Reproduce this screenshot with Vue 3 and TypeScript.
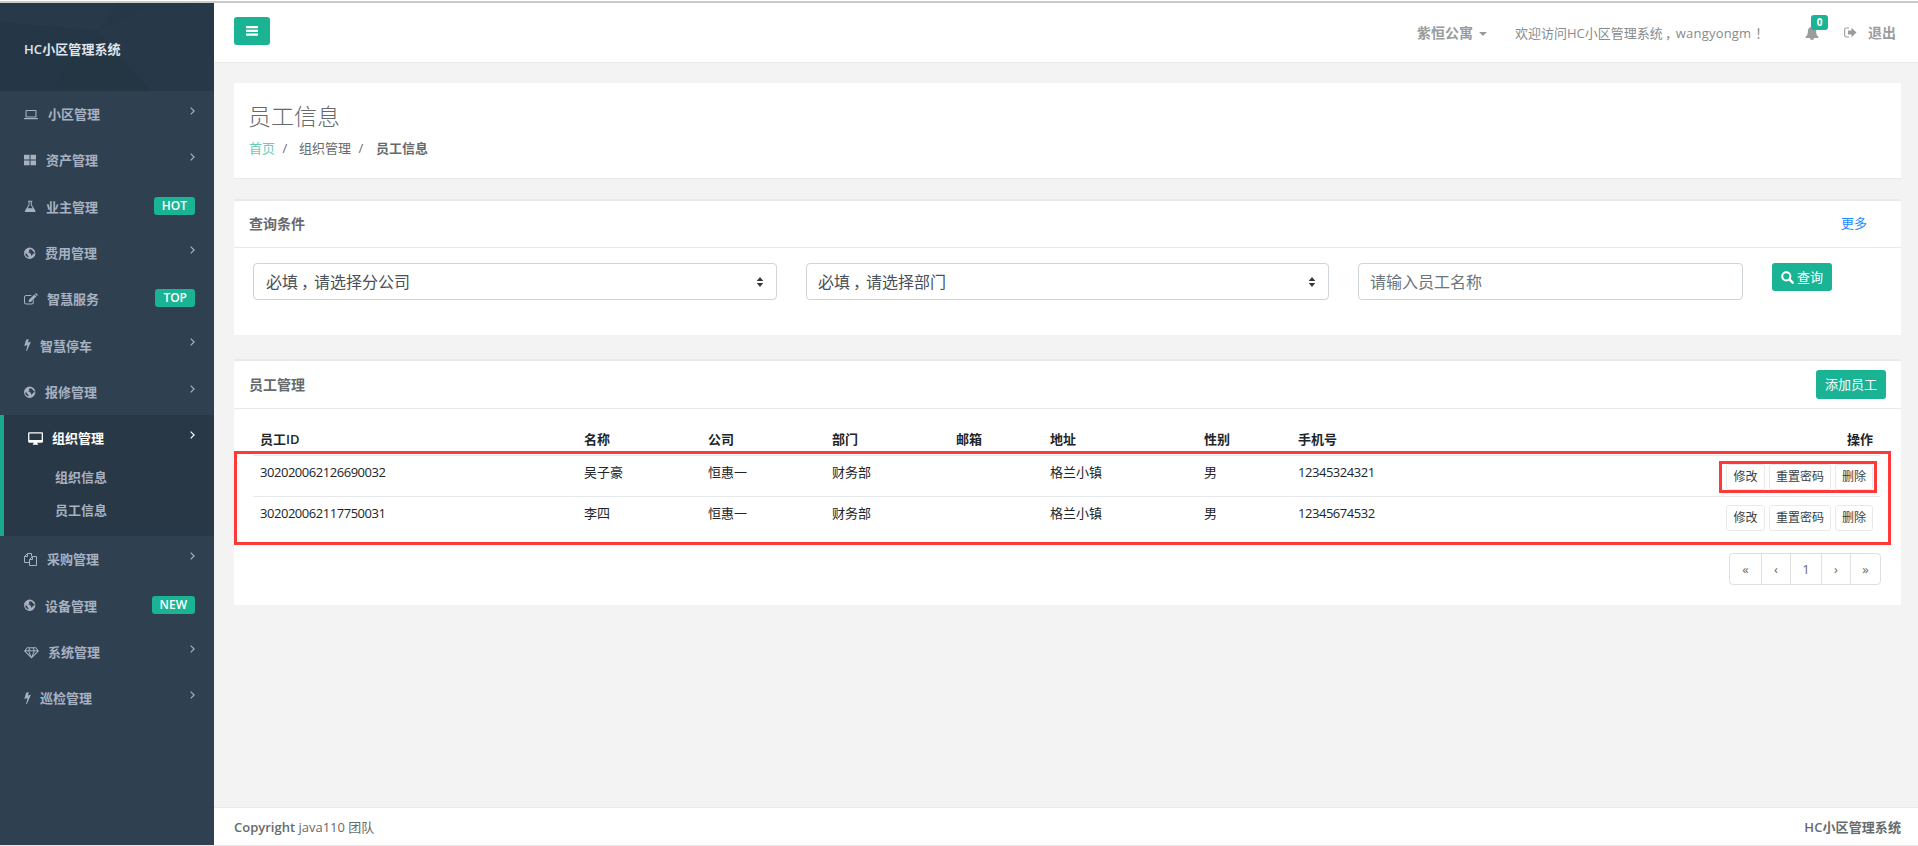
<script setup lang="ts">
interface MenuItem {
  name: string
  icon: string
  w: number
  badge?: string
  active?: boolean
  children?: string[]
}

interface Staff {
  id: string
  name: string
  company: string
  dept: string
  email: string
  address: string
  sex: string
  tel: string
}

const icons: Record<string, string> = {
  laptop:
    'M2.5 2h9a1 1 0 0 1 1 1v5.6a.9.9 0 0 1-.9.9H2.4a.9.9 0 0 1-.9-.9V3a1 1 0 0 1 1-1zm.1 1v5.4h8.8V3zM0 10h14v.6a.7.7 0 0 1-.7.7H.7a.7.7 0 0 1-.7-.7z',
  large: 'M.6.7h4.9v4.8H0V1.300a.6.6 0 0 1 .6-.6zM6.500.7h4.900a.6.6 0 0 1 .6.600v4.200H6.500zM0 6.500h5.500v4.800H.6a.6.6 0 0 1-.6-.6zM6.500 6.500H12v4.200a.6.6 0 0 1-.6.600H6.500z',
  flask:
    'M4 .8h4.400v1H7.800v3l3.500 5.600c.5.800.1 1.700-.9 1.700H2c-1 0-1.400-.9-.9-1.700l3.500-5.600v-3H4zm1.600 1v3.300L3.700 8.200h5L6.800 5.100V1.800z',
  globe:
    'M5.700.5a5.700 5.700 0 1 1 0 11.400 5.700 5.700 0 0 1 0-11.400zM6 2.200 4.900 3.300l.5 1.200-1.300.9 1.700.4 1.300 1.700-.2 1.300 1.300-.6.9-1.500 1.300-.3.2-1.500-1.500-.4L8 2.700zM1.200 6.300l.5 2.300 2.300 2 .7-1.200-1.300-1.300-.5-1.300z',
  edit:
    'M2.300 1.900h5.500l-1 1H2.300c-.7 0-1.300.600-1.300 1.300v5c0 .7.600 1.300 1.300 1.300h5.200c.7 0 1.300-.6 1.300-1.300V7.800l1-1v2.500c0 1.300-1 2.300-2.300 2.300H2.300C1 11.600 0 10.600 0 9.300V4.200c0-1.300 1-2.300 2.300-2.300zM10.300 1.500l2 2-5.500 5.400h-2v-2zM11 .9l.5-.5c.3-.3.700-.3 1 0l1 1c.3.3.3.700 0 1l-.6.6z',
  bolt: 'M2.200.4h2.800L3.700 3.600l3.200-.8-4 9.300h-.8l1.400-6L.3 7z',
  desktop:
    'M1.300.3h12.500c.7 0 1.200.5 1.200 1.200v8.100c0 .7-.5 1.200-1.200 1.200H9.300l.4 1.300c.5.100.7.300.7.700H4.600c0-.4.300-.6.700-.7l.4-1.300H1.300c-.7 0-1.200-.5-1.200-1.200V1.500C.1.800.6.300 1.300.3zm.1 1.200V8h12.300V1.500z',
  files: 'M5 9.500H.5v-6l3-3h4v3M3.500.5v3h-3M5.500 6.500l3-3h4v9h-7zM8.500 3.500v3h-3',
  diamond:
    'M3 1.200h9l3 3.700L7.500 12.500 0 4.900zM3.400 2.200 1.700 4.300h2.600l.9-2.100zm2.900 0-.9 2.100h4.200l-.9-2.100zm3.500 0 .9 2.100h2.600l-1.700-2.100zM1.800 5.300l4.200 4.300-1.700-4.300zm3.600 0 2.100 5.400 2.100-5.400zm5.300 0L9 9.600l4.200-4.300z'
}

const menus: MenuItem[] = [
  { name: '小区管理', icon: 'laptop', w: 14 },
  { name: '资产管理', icon: 'large', w: 12 },
  { name: '业主管理', icon: 'flask', w: 12, badge: 'HOT' },
  { name: '费用管理', icon: 'globe', w: 11 },
  { name: '智慧服务', icon: 'edit', w: 13, badge: 'TOP' },
  { name: '智慧停车', icon: 'bolt', w: 6 },
  { name: '报修管理', icon: 'globe', w: 11 },
  { name: '组织管理', icon: 'desktop', w: 15, active: true, children: ['组织信息', '员工信息'] },
  { name: '采购管理', icon: 'files', w: 13 },
  { name: '设备管理', icon: 'globe', w: 11, badge: 'NEW' },
  { name: '系统管理', icon: 'diamond', w: 14 },
  { name: '巡检管理', icon: 'bolt', w: 6 }
]

const headers: string[] = ['员工ID', '名称', '公司', '部门', '邮箱', '地址', '性别', '手机号', '操作']
const staffs: Staff[] = [
  { id: '302020062126690032', name: '吴子豪', company: '恒惠一', dept: '财务部', email: '', address: '格兰小镇', sex: '男', tel: '12345324321' },
  { id: '302020062117750031', name: '李四', company: '恒惠一', dept: '财务部', email: '', address: '格兰小镇', sex: '男', tel: '12345674532' }
]
const actions: string[] = ['修改', '重置密码', '删除']
const pages: string[] = ['«', '‹', '1', '›', '»']
</script>

<template>
  <div class="page">
    <div class="strip"></div>
    <div class="layout">
      <nav class="sidebar">
        <div class="brand">
          <svg class="facets" width="214" height="88" viewBox="0 0 214 88">
            <path d="M0 0H116L98 28 0 19z" fill="#283a4a" />
            <path d="M98 28 141 7 214 0V88H151L118 52z" fill="#273949" />
            <path d="M0 19 98 28 52 88H0z" fill="#253746" />
            <path d="M68 58 98 28 118 52 151 88H52z" fill="#243544" />
          </svg>
          <span class="brand-name">HC小区管理系统</span>
        </div>
        <div v-for="m in menus" :key="m.name" class="item" :class="{ active: m.active }">
          <div class="row">
            <svg class="mi" :class="{ outline: m.icon === 'files' }" :width="m.w" height="13" :viewBox="`0 0 ${m.w} 13`"><path :d="icons[m.icon]" fill-rule="evenodd" /></svg>
            <span class="label">{{ m.name }}</span>
            <span v-if="m.badge" class="badge">{{ m.badge }}</span>
            <svg v-else class="arrow" width="5" height="8" viewBox="0 0 5 8"><path d="M.7.6 4.100 4 .7 7.400" fill="none" stroke="currentColor" stroke-width="1.200" /></svg>
          </div>
          <div v-for="c in m.children" :key="c" class="sub">{{ c }}</div>
        </div>
      </nav>

      <main class="main">
        <header class="topbar">
          <button class="burger" type="button">
            <svg width="12" height="10" viewBox="0 0 12 10"><path d="M0 0h12v2.300H0zM0 3.700h12V6H0zM0 7.400h12v2.300H0z" fill="#fff" /></svg>
          </button>
          <span class="community">紫恒公寓</span>
          <i class="caret"></i>
          <span class="welcome">欢迎访问HC小区管理系统<span class="comma">，</span><span class="user">wangyongm</span><span class="bang">！</span></span>
          <span class="bell">
            <svg width="14" height="14" viewBox="0 0 14 14"><path d="M7 0c.6 0 .9.400.9.900 2.200.5 3.200 2.200 3.200 4.100 0 3.300.9 4.700 2.500 5.900 0 .6-.5 1-1 1H9c0 1.200-.8 2-2 2s-2-.8-2-2H1.400c-.5 0-1-.400-1-1C2 9.700 2.900 8.300 2.900 5c0-1.900 1-3.600 3.200-4.100C6.100.4 6.400 0 7 0z" fill="#999c9e" /></svg>
            <b class="count">0</b>
          </span>
          <svg class="signout" width="13" height="11" viewBox="0 0 13 11"><path d="M5 .5v1H2.500C1.700 1.500 1.200 2 1.200 2.700v5.600c0 .7.500 1.200 1.300 1.200H5v1H2.500C1.100 10.500.1 9.600.1 8.300V2.700C.1 1.400 1.100.5 2.500.5zM7.500.8l5 4.700-5 4.700V7.600H4V3.400h3.500z" fill="#999c9e" /></svg>
          <span class="logout">退出</span>
        </header>

        <div class="content">
          <section class="heading">
            <h2>员工信息</h2>
            <div class="crumbs"><a>首页</a><i>/</i><span>组织管理</span><i>/</i><strong>员工信息</strong></div>
          </section>

          <section class="box search">
            <div class="box-title"><h5>查询条件</h5><a class="more">更多</a></div>
            <div class="filters">
              <div class="field"><span>必填<span class="comma">，</span>请选择分公司</span><svg width="8" height="10" viewBox="0 0 8 10"><path d="M4 0 7.300 4H.7zM4 10 .7 6h6.600z" fill="#343a40" /></svg></div>
              <div class="field"><span>必填<span class="comma">，</span>请选择部门</span><svg width="8" height="10" viewBox="0 0 8 10"><path d="M4 0 7.300 4H.7zM4 10 .7 6h6.600z" fill="#343a40" /></svg></div>
              <div class="field placeholder"><span>请输入员工名称</span></div>
              <button class="primary query" type="button">
                <svg width="13" height="13" viewBox="0 0 13 13"><circle cx="5.300" cy="5.300" r="4.100" fill="none" stroke="#fff" stroke-width="2" /><path d="m8.400 8.400 3.300 3.300" stroke="#fff" stroke-width="2.400" stroke-linecap="round" /></svg>
                <span>查询</span>
              </button>
            </div>
          </section>

          <section class="box staff">
            <div class="box-title"><h5>员工管理</h5><button class="primary add" type="button"><span>添加员工</span></button></div>
            <div class="table">
              <div class="tr th"><span v-for="h in headers" :key="h">{{ h }}</span></div>
              <div v-for="s in staffs" :key="s.id" class="tr td">
                <span>{{ s.id }}</span>
                <span>{{ s.name }}</span>
                <span>{{ s.company }}</span>
                <span>{{ s.dept }}</span>
                <span>{{ s.email }}</span>
                <span>{{ s.address }}</span>
                <span>{{ s.sex }}</span>
                <span>{{ s.tel }}</span>
                <div class="ops"><button v-for="a in actions" :key="a" type="button">{{ a }}</button></div>
              </div>
            </div>
            <div class="pager"><span v-for="p in pages" :key="p">{{ p }}</span></div>
            <div class="mark mark-rows"></div>
            <div class="mark mark-ops"></div>
          </section>
        </div>

        <footer class="footer">
          <span><strong>Copyright</strong> java110 团队</span>
          <strong class="owner">HC小区管理系统</strong>
        </footer>
      </main>
    </div>
  </div>
</template>

<style>
body {
  margin: 0;
  overflow: hidden;
}
</style>

<style scoped>
* {
  box-sizing: border-box;
}
.page {
  height: 846px;
  display: flex;
  flex-direction: column;
  padding-top: 1px;
  border-bottom: 1px solid #e7e7e7;
  background: #fff;
  font-family: 'Open Sans', 'Noto Sans CJK SC', sans-serif;
  font-size: 13px;
  line-height: 20px;
  color: #676a6c;
  white-space: nowrap;
}
button {
  font: inherit;
  padding: 0;
  border: 0;
}
.strip {
  height: 2px;
  background: #c9cbca;
}
.layout {
  flex: 1;
  display: flex;
  min-height: 0;
}
.sidebar {
  width: 214px;
  background: #2f4050;
  color: #a7b1c2;
  font-weight: 600;
}
.brand {
  position: relative;
  height: 88px;
  padding: 36px 0 0 24px;
  background: #263847;
}
.facets {
  position: absolute;
  left: 0;
  top: 0;
}
.brand-name {
  position: relative;
  color: #dfe4ed;
  letter-spacing: 0.08px;
}
.row {
  height: 46.33px;
  display: flex;
  align-items: center;
  padding: 0 19px 0 24px;
}
.label {
  margin-left: 10px;
}
.active .label {
  margin-left: 9px;
}
.mi {
  flex: none;
  overflow: visible;
  fill: currentColor;
}
.outline {
  fill: none;
  stroke: currentColor;
}
.arrow {
  margin: -7px 0 0 auto;
}
.badge {
  margin: -2px 0 0 auto;
  height: 18px;
  padding: 0 8px;
  border-radius: 3px;
  background: #1ab394;
  color: #fff;
  font-size: 12px;
  line-height: 18px;
}
.active {
  height: 121px;
  background: #293846;
  border-left: 4px solid #19aa8d;
}
.active .row {
  color: #fff;
}
.sub {
  height: 33px;
  padding-left: 51px;
  line-height: 31px;
}
.main {
  flex: 1;
  display: flex;
  flex-direction: column;
  background: #f3f3f4;
}
.topbar {
  height: 60px;
  display: flex;
  align-items: center;
  padding: 0 22px 0 20px;
  border-bottom: 1px solid #e7eaec;
  background: #fff;
  color: #999c9e;
}
.burger {
  width: 36px;
  height: 28px;
  margin: -3px auto 0 0;
  display: flex;
  align-items: center;
  justify-content: center;
  border-radius: 3px;
  background: #1ab394;
}
.community,
.logout {
  font-size: 14px;
  font-weight: 600;
}
.caret {
  margin: 2px 28px 0 6px;
  border: 4px solid transparent;
  border-top-color: #999c9e;
  border-bottom: 0;
}
.welcome {
  width: 248px;
  color: #888b8d;
}
.comma {
  padding-left: 0.18em;
  margin-right: -0.18em;
}
.user {
  letter-spacing: 0.2px;
}
.bang {
  padding-left: 4px;
  margin-right: -4px;
}
.bell {
  position: relative;
  height: 14px;
  margin: 1px 25px 0 42px;
  display: flex;
}
.count {
  position: absolute;
  left: 6px;
  top: -11px;
  width: 17px;
  height: 15px;
  border-radius: 3px;
  background: #1ab394;
  color: #fff;
  font-size: 10px;
  line-height: 15px;
  text-align: center;
}
.logout {
  margin-left: 11px;
}
.content {
  flex: 1;
  padding: 20px 17px 0 20px;
}
.heading {
  height: 96px;
  padding: 16px 15px 0 14px;
  border-bottom: 1px solid #e7eaec;
  background: #fff;
}
h2 {
  height: 34px;
  margin: 0;
  font-size: 23px;
  line-height: 34px;
  font-weight: 300;
}
.crumbs {
  display: flex;
  margin: 5px 0 0 1px;
}
.crumbs a {
  color: #68cdb3;
}
.crumbs i {
  width: 24px;
  padding-left: 7.500px;
  font-style: normal;
}
.crumbs i + strong {
  margin-left: 1px;
}
strong {
  font-weight: 600;
}
.box {
  position: relative;
  background: #fff;
  border-top: 2px solid #e7eaec;
}
.search {
  height: 136px;
  margin-top: 20px;
}
.staff {
  height: 246px;
  margin-top: 24px;
}
.box-title {
  height: 47px;
  display: flex;
  align-items: center;
  justify-content: space-between;
  padding: 0 15px;
  border-bottom: 1px solid #e7eaec;
}
.staff .box-title {
  height: 48px;
}
h5 {
  margin: 0;
  font-size: 14px;
  font-weight: 600;
}
.more {
  margin: -2px 19px 0 0;
  color: #1e8bff;
}
.filters {
  display: grid;
  grid-template-columns: 524px 523px 385px 60px;
  column-gap: 29px;
  padding: 15px 19px 0;
}
.field {
  height: 37px;
  display: flex;
  align-items: center;
  justify-content: space-between;
  padding: 0 12px;
  border: 1px solid #ced4da;
  border-radius: 4px;
  color: #495057;
  font-size: 16px;
}
.field:nth-child(n + 2) {
  padding-left: 11px;
}
.placeholder {
  color: #6c757d;
}
.primary {
  display: flex;
  align-items: center;
  justify-content: center;
  height: 28px;
  border-radius: 3px;
  background: #1ab394;
  color: #fff;
}
.primary span {
  margin-top: -1px;
}
.query {
  gap: 3px;
}
.add {
  width: 70px;
  height: 29px;
}
.table {
  margin: 15px 21px 0 19px;
  color: #212529;
}
.tr {
  display: grid;
  grid-template-columns: 324px 124px 124px 124px 94px 154px 94px 1fr 160px;
  padding: 0 7px 0 7px;
}
.th {
  height: 31px;
  padding-top: 5px;
  font-weight: 600;
}
.th span:last-child {
  text-align: right;
}
.td {
  height: 41px;
  padding-top: 6px;
  border-top: 1px solid #e7eaec;
  letter-spacing: -0.460px;
}
.td span:not(:first-child):not(:nth-child(8)) {
  letter-spacing: 0;
}
.ops {
  display: flex;
  justify-content: flex-end;
  gap: 4px;
  padding-top: 2px;
  letter-spacing: 0;
}
.ops button {
  height: 26px;
  padding: 0 6px;
  border: 1px solid #e7eaec;
  border-radius: 3px;
  background: #fff;
  color: #393e42;
  font-size: 12px;
}
.ops button:first-child {
  width: 39px;
}
.pager {
  display: grid;
  grid-template-columns: 31px 29px 31px 29px 1fr;
  width: 152px;
  height: 32px;
  margin: 16px 20px 0 auto;
  border: 1px solid #dddfe3;
  border-radius: 4px;
  line-height: 30px;
  text-align: center;
}
.pager span + span {
  border-left: 1px solid #dddfe3;
}
.mark {
  position: absolute;
  border: 3px solid #ff3838;
}
.mark-rows {
  left: 0;
  top: 90px;
  width: 1657px;
  height: 94px;
}
.mark-ops {
  left: 1485px;
  top: 100px;
  width: 158px;
  height: 32px;
}
.footer {
  height: 38px;
  display: flex;
  align-items: center;
  justify-content: space-between;
  padding: 0 17px 0 20px;
  border-top: 1px solid #e7eaec;
  background: #fff;
}
.owner {
  letter-spacing: 0.08px;
}
</style>
